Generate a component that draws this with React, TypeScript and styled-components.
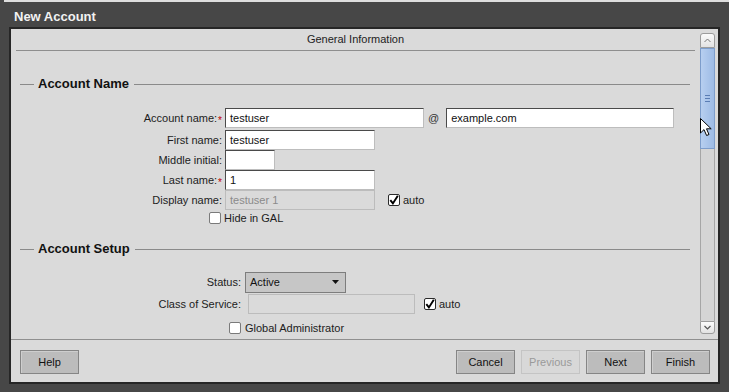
import styled, { createGlobalStyle } from 'styled-components';

const GlobalStyle = createGlobalStyle`
  html, body {
    margin: 0;
    padding: 0;
  }
  body {
    background: #474747;
    font-family: 'Liberation Sans', Arial, sans-serif;
    font-size: 11px;
    color: #1c1c1c;
    overflow: hidden;
  }
`;

const Window = styled.div`
  position: relative;
  width: 729px;
  height: 392px;
  display: flex;
  flex-direction: column;
  background: #474747;
`;

const Backdrop = styled.div`
  height: 2px;
  margin-left: 4px;
  background: #dedede;
`;

const TitleBar = styled.div`
  height: 20px;
  padding: 5px 0 0 14px;
  line-height: 20px;
  font-size: 13px;
  font-weight: bold;
  color: #f2f2f2;
`;

const Panel = styled.div`
  flex: 1;
  min-height: 0;
  margin: 0 9px 8px 9px;
  border: 2px solid #262626;
  background: #dadada;
  display: flex;
  flex-direction: column;
`;

const ScrollArea = styled.div`
  height: 310px;
  display: flex;
  overflow: hidden;
`;

const Content = styled.div`
  flex: 1;
  min-width: 0;
`;

const TabHeader = styled.div`
  margin: 0 5px;
  height: 21px;
  line-height: 21px;
  text-align: center;
  border-bottom: 1px solid #8e8e8e;
  color: #222;
`;

const SectionHeading = styled.div<{ $top: number; $bottom: number }>`
  display: flex;
  align-items: center;
  height: 16px;
  margin: ${(p) => p.$top}px 10px ${(p) => p.$bottom}px 9px;
  font-size: 13px;
  font-weight: bold;
  color: #111;
`;

const HeadingLine = styled.span<{ $grow?: boolean }>`
  height: 1px;
  background: #8a8a8a;
  width: 14px;
  flex: ${(p) => (p.$grow ? 1 : 'none')};
`;

const HeadingText = styled.span`
  margin: 0 5px 0 4px;
  line-height: 16px;
`;

const Row = styled.div<{ $h?: number; $top?: number; $bottom?: number }>`
  display: flex;
  align-items: center;
  height: ${(p) => p.$h ?? 20}px;
  margin-top: ${(p) => p.$top ?? 0}px;
  margin-bottom: ${(p) => p.$bottom ?? 0}px;
`;

const Label = styled.div<{ $w: number }>`
  width: ${(p) => p.$w}px;
  flex: none;
  display: flex;
  justify-content: flex-end;
  align-items: center;
  white-space: nowrap;
`;

const Req = styled.span`
  color: #c00000;
  font-size: 10px;
  align-self: flex-start;
  margin-top: 4px;
  margin-left: 1px;
`;

const Input = styled.div<{ $w: number; $left?: number; $disabled?: boolean }>`
  width: ${(p) => p.$w}px;
  height: 20px;
  margin-left: ${(p) => p.$left ?? 3}px;
  box-sizing: border-box;
  padding: 0 4px;
  line-height: 18px;
  background: ${(p) => (p.$disabled ? '#dadada' : '#fff')};
  color: ${(p) => (p.$disabled ? '#8a8a8a' : '#111')};
  border: 1px solid;
  border-color: ${(p) =>
    p.$disabled ? '#bcbcbc' : '#4a4a4a #bdbdbd #bdbdbd #4a4a4a'};
  white-space: nowrap;
  overflow: hidden;
`;

const At = styled.span`
  margin: 0 7px 0 4px;
  color: #333;
`;

const Box = styled.span<{ $checked?: boolean; $left?: number; $right?: number }>`
  width: 12px;
  height: 12px;
  flex: none;
  box-sizing: border-box;
  margin-left: ${(p) => p.$left ?? 0}px;
  margin-right: ${(p) => p.$right ?? 0}px;
  border: 1px solid ${(p) => (p.$checked ? '#2a2a2a' : '#7a7a7a')};
  border-radius: 2px;
  background: #fff;
  display: inline-flex;
  align-items: center;
  justify-content: center;
`;

const CheckText = styled.span<{ $left?: number }>`
  margin-left: ${(p) => p.$left ?? 3}px;
  white-space: nowrap;
`;

const Select = styled.div`
  width: 101px;
  height: 21px;
  margin-left: 4px;
  box-sizing: border-box;
  padding: 0 6px 0 4px;
  border: 1px solid #7d7d7d;
  background: #c6c6c6;
  display: flex;
  align-items: center;
  justify-content: space-between;
  color: #111;
`;

const Scrollbar = styled.div`
  width: 15px;
  margin: 4px 3px 0 0;
  display: flex;
  flex-direction: column;
`;

const ArrowButton = styled.div<{ $up?: boolean }>`
  height: ${(p) => (p.$up ? 15 : 13)}px;
  box-sizing: border-box;
  border: 1px solid #9c9c9c;
  border-radius: ${(p) => (p.$up ? '3px 3px 0 0' : '0 0 3px 3px')};
  background: linear-gradient(#fbfbfb, #e2e2e2);
  display: flex;
  align-items: center;
  justify-content: center;
`;

const Thumb = styled.div`
  height: 101px;
  box-sizing: border-box;
  border: 1px solid #7d9dcb;
  background: linear-gradient(90deg, #b7cff0, #9dbbe5);
  display: flex;
  align-items: center;
  justify-content: center;
`;

const Grip = styled.div`
  width: 5px;
  height: 5px;
  border-top: 1px solid #5a7db4;
  border-bottom: 1px solid #5a7db4;
  position: relative;
  &::after {
    content: '';
    position: absolute;
    left: 0;
    right: 0;
    top: 2px;
    height: 1px;
    background: #5a7db4;
  }
`;

const Track = styled.div`
  flex: none;
  height: 172px;
  box-sizing: border-box;
  border-left: 1px solid #a6a6a6;
  border-right: 1px solid #a6a6a6;
  background: #d5d5d5;
`;

const Footer = styled.div`
  flex: 1;
  border-top: 1px solid #8f8f8f;
  padding: 10px 8px 0 9px;
  display: flex;
  gap: 6px;
`;

const Spacer = styled.div`
  flex: 1;
`;

const Button = styled.button<{ $disabled?: boolean }>`
  width: 59px;
  height: 24px;
  padding: 0;
  font-family: 'Liberation Sans', Arial, sans-serif;
  font-size: 11px;
  background: ${(p) => (p.$disabled ? '#d8d8d8' : '#bcbcbc')};
  border: 1px solid ${(p) => (p.$disabled ? '#c4c4c4' : '#858585')};
  color: ${(p) => (p.$disabled ? '#9a9a9a' : '#111')};
  box-shadow: ${(p) => (p.$disabled ? 'none' : 'inset 1px 1px 0 #cecece')};
`;

const Pointer = styled.svg`
  position: absolute;
  left: 700px;
  top: 118px;
`;

const Check = ({ checked }: { checked?: boolean }) =>
  checked ? (
    <svg width="10" height="10" viewBox="0 0 10 10">
      <path d="M1.3 5.2 L3.9 8.4 L8.8 0.8" fill="none" stroke="#000" strokeWidth="1.9" />
    </svg>
  ) : null;

const App = () => {
  return (
    <>
      <GlobalStyle />
      <Window>
        <Backdrop />
        <TitleBar>New Account</TitleBar>
        <Panel>
          <ScrollArea>
            <Content>
              <TabHeader>General Information</TabHeader>

              <SectionHeading $top={25} $bottom={16}>
                <HeadingLine />
                <HeadingText>Account Name</HeadingText>
                <HeadingLine $grow />
              </SectionHeading>
              <Row $bottom={2}>
                <Label $w={211}>
                  Account name:<Req>*</Req>
                </Label>
                <Input $w={199}>testuser</Input>
                <At>@</At>
                <Input $w={228} $left={0}>example.com</Input>
              </Row>
              <Row>
                <Label $w={211}>First name:</Label>
                <Input $w={150}>testuser</Input>
              </Row>
              <Row>
                <Label $w={211}>Middle initial:</Label>
                <Input $w={50} />
              </Row>
              <Row>
                <Label $w={211}>
                  Last name:<Req>*</Req>
                </Label>
                <Input $w={150}>1</Input>
              </Row>
              <Row>
                <Label $w={211}>Display name:</Label>
                <Input $w={150} $disabled>testuser 1</Input>
                <Box $checked $left={13}>
                  <Check checked />
                </Box>
                <CheckText>auto</CheckText>
              </Row>
              <Row $h={16}>
                <Label $w={211}>
                  <Box $right={1} />
                </Label>
                <CheckText $left={2}>Hide in GAL</CheckText>
              </Row>

              <SectionHeading $top={15} $bottom={14}>
                <HeadingLine />
                <HeadingText>Account Setup</HeadingText>
                <HeadingLine $grow />
              </SectionHeading>
              <Row $h={22}>
                <Label $w={230}>Status:</Label>
                <Select>
                  Active
                  <svg width="7" height="4" viewBox="0 0 7 4">
                    <path d="M0 0 H7 L3.5 4 Z" fill="#111" />
                  </svg>
                </Select>
              </Row>
              <Row $h={21}>
                <Label $w={230}>Class of Service:</Label>
                <Input $w={167} $left={7} $disabled />
                <Box $checked $left={9}>
                  <Check checked />
                </Box>
                <CheckText>auto</CheckText>
              </Row>
              <Row $h={16} $top={6}>
                <Label $w={230}>
                  <Box />
                </Label>
                <CheckText $left={4}>Global Administrator</CheckText>
              </Row>
            </Content>
            <Scrollbar>
              <ArrowButton $up>
                <svg width="7" height="5" viewBox="0 0 7 5">
                  <path d="M0.5 4 L3.5 1 L6.5 4" fill="none" stroke="#777" strokeWidth="1" />
                </svg>
              </ArrowButton>
              <Thumb>
                <Grip />
              </Thumb>
              <Track />
              <ArrowButton>
                <svg width="7" height="5" viewBox="0 0 7 5">
                  <path d="M0.5 1 L3.5 4 L6.5 1" fill="none" stroke="#555" strokeWidth="1.2" />
                </svg>
              </ArrowButton>
            </Scrollbar>
          </ScrollArea>
          <Footer>
            <Button>Help</Button>
            <Spacer />
            <Button>Cancel</Button>
            <Button $disabled>Previous</Button>
            <Button>Next</Button>
            <Button>Finish</Button>
          </Footer>
        </Panel>
        <Pointer width="13" height="19" viewBox="0 0 13 19">
          <path
            d="M0.5 0.5 L0.5 15 L4 11.6 L6.6 17.5 L9 16.5 L6.5 10.8 L11.2 10.8 Z"
            fill="#fff"
            stroke="#000"
            strokeWidth="1"
            strokeLinejoin="round"
          />
        </Pointer>
      </Window>
    </>
  );
};

export default App;
